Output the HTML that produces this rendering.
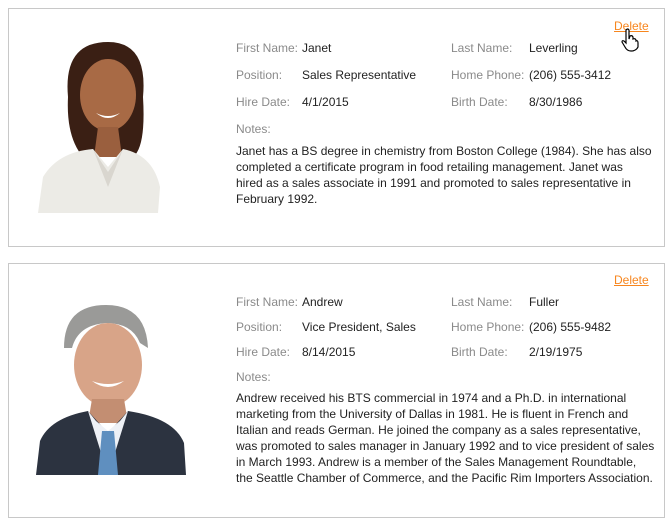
<!DOCTYPE html>
<html><head><style>
body{margin:0;width:671px;height:524px;background:#fff;font-family:"Liberation Sans",sans-serif;font-size:12px;color:#222;position:relative;overflow:hidden}
.card{position:absolute;left:8px;width:657px;border:1px solid #c8c8c8;box-sizing:border-box}
.t{position:absolute;white-space:nowrap}
.l{color:#8a8a8a}
.del{position:absolute;color:#f7861e;text-decoration:underline;left:614px}
.notes{position:absolute;left:236px;width:416px;line-height:16px;font-size:12px}
</style></head><body>
<div class="card" style="top:8px;height:239px"></div>
<div class="card" style="top:263px;height:255px"></div>

<svg style="position:absolute;left:38px;top:37px" width="148" height="176" viewBox="0 0 148 176">
<path d="M30 60 Q25 5 70 5 Q110 5 105 60 Q108 110 95 120 L45 120 Q28 100 30 60Z" fill="#3a1f14"/>
<ellipse cx="70" cy="58" rx="28" ry="36" fill="#a86a45"/>
<path d="M60 90 L80 90 L84 120 L56 120Z" fill="#9a5f3e"/>
<path d="M0 176 L5 140 Q20 115 55 112 L70 130 L85 112 Q115 118 122 150 L120 176Z" fill="#ecebe6"/>
<path d="M55 112 L70 150 L85 112 L80 120 L70 135 L60 120Z" fill="#d9d6cf"/>
<path d="M58 76 Q70 86 82 76 Q70 82 58 76Z" fill="#fff"/>
</svg>

<svg style="position:absolute;left:36px;top:303px" width="150" height="172" viewBox="0 0 150 172">
<path d="M28 45 Q28 2 70 2 Q110 2 112 45 L104 40 Q96 20 70 20 Q42 22 36 45Z" fill="#9a9a98"/>
<ellipse cx="72" cy="62" rx="34" ry="42" fill="#d8a488"/>
<path d="M56 96 L88 96 L92 120 L52 120Z" fill="#c38e72"/>
<path d="M0 172 L4 138 Q14 115 52 108 L72 130 L92 108 Q138 115 148 140 L150 172Z" fill="#2c3340"/>
<path d="M52 108 L72 172 L92 108 L84 118 L72 128 L60 118Z" fill="#eef1f6"/>
<path d="M66 128 L78 128 L82 172 L62 172Z" fill="#5f8fbf"/>
<path d="M56 78 Q72 90 88 78 Q72 84 56 78Z" fill="#fff"/>
</svg>

<span class="del" style="top:19px">Delete</span>
<svg style="position:absolute;left:620px;top:28px" width="20" height="24" viewBox="0 0 20 24"><path d="M6 2 Q8 0 9 2 L9 11 L10 8 Q12 7 13 9 L13 11 Q15 10 16 12 L16 13 Q18 12 18 15 L18 19 Q16 23 11 23 Q7 23 5 19 L2 14 Q2 12 4 13 L6 15Z" fill="#fff" stroke="#000" stroke-width="1.2"/></svg>
<div class="t l" style="left:236px;top:41px">First Name:</div><div class="t" style="left:302px;top:41px">Janet</div>
<div class="t l" style="left:451px;top:41px">Last Name:</div><div class="t" style="left:529px;top:41px">Leverling</div>
<div class="t l" style="left:236px;top:68px">Position:</div><div class="t" style="left:302px;top:68px">Sales Representative</div>
<div class="t l" style="left:451px;top:68px">Home Phone:</div><div class="t" style="left:529px;top:68px">(206) 555-3412</div>
<div class="t l" style="left:236px;top:95px">Hire Date:</div><div class="t" style="left:302px;top:95px">4/1/2015</div>
<div class="t l" style="left:451px;top:95px">Birth Date:</div><div class="t" style="left:529px;top:95px">8/30/1986</div>
<div class="t l" style="left:236px;top:122px">Notes:</div>
<div class="notes" style="top:143px">Janet has a BS degree in chemistry from Boston College (1984). She has also completed a certificate program in food retailing management. Janet was<br>hired as a sales associate in 1991 and promoted to sales representative in<br>February 1992.</div>

<span class="del" style="top:273px">Delete</span>
<div class="t l" style="left:236px;top:295px">First Name:</div><div class="t" style="left:302px;top:295px">Andrew</div>
<div class="t l" style="left:451px;top:295px">Last Name:</div><div class="t" style="left:529px;top:295px">Fuller</div>
<div class="t l" style="left:236px;top:320px">Position:</div><div class="t" style="left:302px;top:320px">Vice President, Sales</div>
<div class="t l" style="left:451px;top:320px">Home Phone:</div><div class="t" style="left:529px;top:320px">(206) 555-9482</div>
<div class="t l" style="left:236px;top:345px">Hire Date:</div><div class="t" style="left:302px;top:345px">8/14/2015</div>
<div class="t l" style="left:451px;top:345px">Birth Date:</div><div class="t" style="left:529px;top:345px">2/19/1975</div>
<div class="t l" style="left:236px;top:370px">Notes:</div>
<div class="notes" style="top:390px;white-space:nowrap">Andrew received his BTS commercial in 1974 and a Ph.D. in international<br>marketing from the University of Dallas in 1981. He is fluent in French and<br>Italian and reads German. He joined the company as a sales representative,<br>was promoted to sales manager in January 1992 and to vice president of sales<br>in March 1993. Andrew is a member of the Sales Management Roundtable,<br>the Seattle Chamber of Commerce, and the Pacific Rim Importers Association.</div>
</body></html>
